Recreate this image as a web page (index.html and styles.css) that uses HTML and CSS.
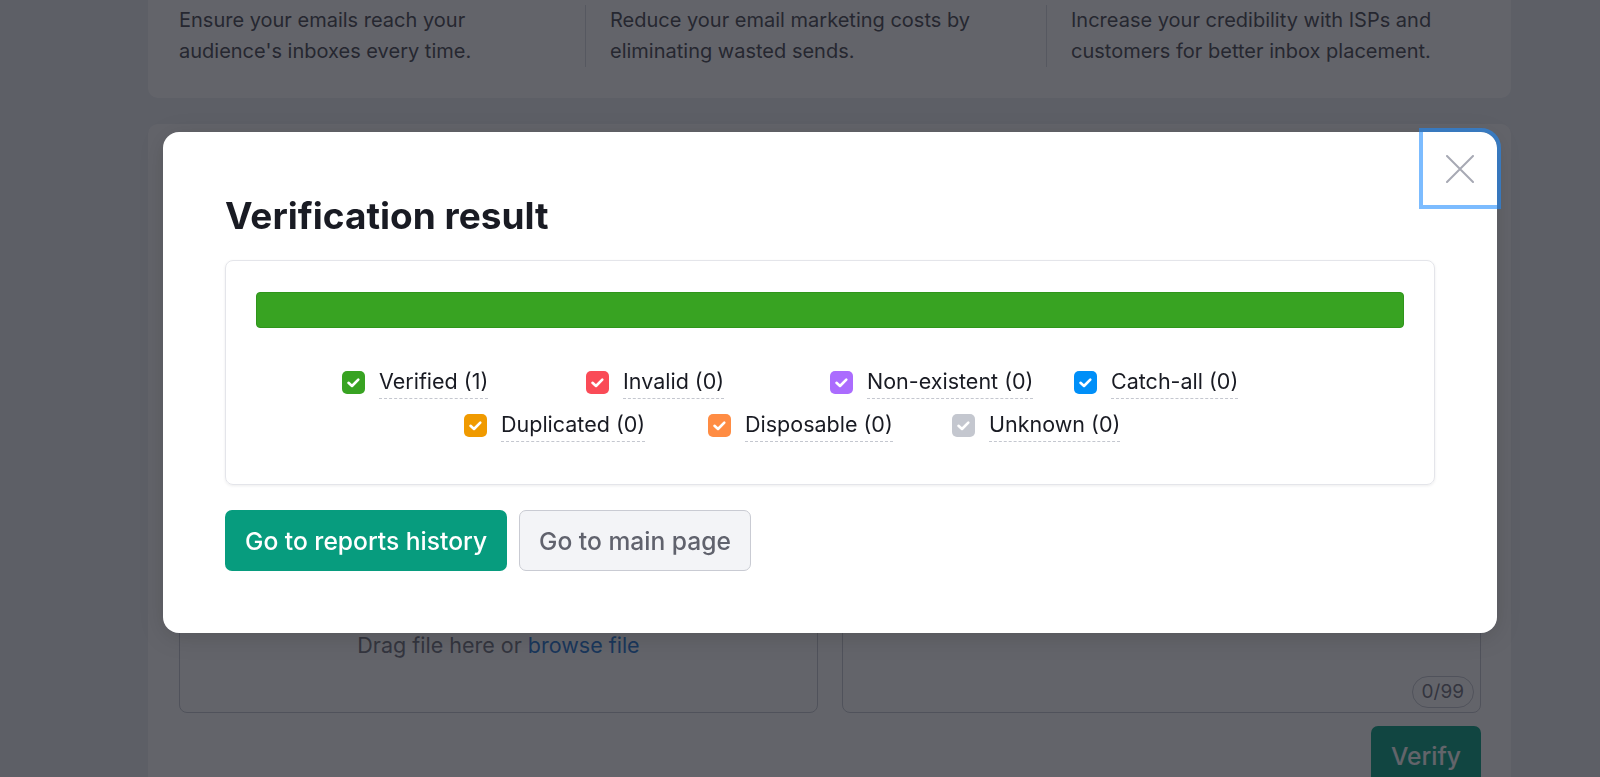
FILE: index.html
```html
<!DOCTYPE html>
<html lang="en">
<head>
<meta charset="utf-8">
<title>Email verification</title>
<link rel="stylesheet" href="styles.css">
</head>
<body>
<main class="content">
  <section class="card benefits">
    <p class="benefit">Ensure your emails reach your audience's inboxes every time.</p>
    <p class="benefit">Reduce your email marketing costs by eliminating wasted sends.</p>
    <p class="benefit">Increase your credibility with ISPs and customers for better inbox placement.</p>
  </section>

  <section class="card verifier">
    <div class="inputs">
      <div class="dropzone">
        <p class="drop-text">Drag file here or <a class="link" href="#">browse file</a></p>
      </div>
      <div class="paste">
        <span class="counter">0/99</span>
      </div>
    </div>
    <div class="verify-row">
      <button class="btn btn-verify" type="button">Verify</button>
    </div>
  </section>
</main>

<div class="overlay">
  <div class="modal" role="dialog" aria-labelledby="modal-title">
    <button class="close" type="button" aria-label="Close">
      <svg width="28" height="28" viewBox="0 0 28 28" aria-hidden="true">
        <path d="M1 1 L27 27 M27 1 L1 27" stroke="#a7a9b4" stroke-width="2" fill="none" stroke-linecap="round"/>
      </svg>
    </button>
    <h1 id="modal-title" class="modal-title">Verification result</h1>

    <div class="result-card">
      <div class="bar"></div>
      <ul class="legend">
        <li class="legend-item">
          <span class="check check-green"><svg viewBox="0 0 23 23"><polyline points="6.5,11.8 10,15 16.3,8.6"/></svg></span>
          <span class="legend-label">Verified (1)</span>
        </li>
        <li class="legend-item">
          <span class="check check-red"><svg viewBox="0 0 23 23"><polyline points="6.5,11.8 10,15 16.3,8.6"/></svg></span>
          <span class="legend-label">Invalid (0)</span>
        </li>
        <li class="legend-item">
          <span class="check check-violet"><svg viewBox="0 0 23 23"><polyline points="6.5,11.8 10,15 16.3,8.6"/></svg></span>
          <span class="legend-label">Non-existent (0)</span>
        </li>
        <li class="legend-item">
          <span class="check check-blue"><svg viewBox="0 0 23 23"><polyline points="6.5,11.8 10,15 16.3,8.6"/></svg></span>
          <span class="legend-label">Catch-all (0)</span>
        </li>
        <li class="legend-item">
          <span class="check check-yellow"><svg viewBox="0 0 23 23"><polyline points="6.5,11.8 10,15 16.3,8.6"/></svg></span>
          <span class="legend-label">Duplicated (0)</span>
        </li>
        <li class="legend-item">
          <span class="check check-orange"><svg viewBox="0 0 23 23"><polyline points="6.5,11.8 10,15 16.3,8.6"/></svg></span>
          <span class="legend-label">Disposable (0)</span>
        </li>
        <li class="legend-item">
          <span class="check check-gray"><svg viewBox="0 0 23 23"><polyline points="6.5,11.8 10,15 16.3,8.6"/></svg></span>
          <span class="legend-label">Unknown (0)</span>
        </li>
      </ul>
    </div>

    <div class="modal-actions">
      <button class="btn btn-primary" type="button">Go to reports history</button>
      <button class="btn btn-secondary" type="button">Go to main page</button>
    </div>
  </div>
</div>
</body>
</html>
```

FILE: styles.css
```css
* {
  box-sizing: border-box;
}

html, body {
  margin: 0;
  padding: 0;
}

body {
  width: 1600px;
  height: 777px;
  overflow: hidden;
  background: #eceef2;
  font-family: "Inter", "Noto Sans", "Liberation Sans", sans-serif;
  color: #191b23;
}

/* ---------- background page ---------- */
.content {
  width: 1363px;
  margin: -25px 0 0 148px;
  display: flex;
  flex-direction: column;
  gap: 26px;
}

.card {
  background: #ffffff;
  border-radius: 10px;
}

.benefits {
  display: grid;
  grid-template-columns: 406px 461px 1fr;
  padding: 30px 30px 31px 31px;
}

.benefit {
  margin: 0;
  padding-right: 25px;
  font-size: 20px;
  line-height: 30.8px;
  color: #41434c;
}

.benefit + .benefit {
  border-left: 1px solid #d6d8df;
  padding-left: 24px;
}

.verifier {
  padding: 30px 30px 40px 31px;
}

.inputs {
  display: grid;
  grid-template-columns: 1fr 1fr;
  gap: 24px;
  height: 559px;
}

.dropzone {
  border: 1px solid #c4c7cf;
  border-radius: 8px;
  display: flex;
  flex-direction: column;
  justify-content: flex-end;
  align-items: center;
  padding-bottom: 53px;
}

.drop-text {
  margin: 0;
  font-size: 21.5px;
  line-height: 28px;
  color: #6c6e79;
}

.link {
  color: #1b73d0;
  text-decoration: none;
}

.paste {
  border: 1px solid #c4c7cf;
  border-radius: 8px;
  display: flex;
  justify-content: flex-end;
  align-items: flex-end;
  padding: 0 6px 4px 0;
}

.counter {
  display: inline-flex;
  align-items: center;
  height: 32px;
  padding: 0 9px;
  border: 1px solid #c4c7cf;
  border-radius: 16px;
  font-size: 19px;
  color: #6c6e79;
}

.verify-row {
  display: flex;
  justify-content: flex-end;
  margin-top: 13px;
}

/* ---------- buttons ---------- */
.btn {
  font-family: inherit;
  font-size: 24.6px;
  font-weight: 500;
  height: 61px;
  border-radius: 7px;
  cursor: pointer;
  white-space: nowrap;
}

.btn-verify {
  width: 110px;
  border: none;
  background: #009f81;
  color: #ffffff;
}

.btn-primary {
  border: none;
  padding: 0 20px;
  background: #079c7e;
  color: #ffffff;
}

.btn-secondary {
  padding: 0 19px;
  border: 1px solid #c9cbd3;
  background: #f3f4f7;
  color: #60626d;
}

/* ---------- overlay & modal ---------- */
.overlay {
  position: fixed;
  inset: 0;
  background: rgba(25, 27, 35, 0.68);
  display: flex;
  justify-content: center;
  align-items: flex-start;
  padding: 132px 0 0 60px;
}

.modal {
  position: relative;
  width: 1334px;
  padding: 62px;
  background: #ffffff;
  border-radius: 16px;
  box-shadow: 0 4px 24px rgba(0, 0, 0, 0.15);
}

.close {
  position: absolute;
  top: 0;
  right: 0;
  width: 74px;
  height: 73px;
  padding: 0;
  border: none;
  background: transparent;
  border-radius: 0 16px 0 0;
  display: flex;
  align-items: center;
  justify-content: center;
  outline: 4px solid rgba(30, 140, 255, 0.58);
  outline-offset: 0;
}

.modal-title {
  margin: 0 0 22px;
  font-size: 37px;
  line-height: 44px;
  font-weight: 700;
  color: #191b23;
}

.result-card {
  border: 1px solid #e4e5ea;
  border-radius: 8px;
  padding: 31px 30px 43px;
  box-shadow: 0 1px 3px rgba(25, 27, 35, 0.08);
}

.bar {
  height: 36px;
  background: #38a322;
  border: 1px solid #2f951b;
  border-radius: 4px;
}

.legend {
  list-style: none;
  margin: 38px 0 0;
  padding: 0;
  display: flex;
  flex-wrap: wrap;
  justify-content: center;
  row-gap: 11px;
}

.legend-item {
  width: 244px;
  height: 32px;
  display: flex;
  align-items: center;
  gap: 14px;
}

.check {
  flex: none;
  width: 23px;
  height: 23px;
  border-radius: 5px;
  display: flex;
}

.check svg {
  width: 23px;
  height: 23px;
  fill: none;
  stroke: #ffffff;
  stroke-width: 2.6;
  stroke-linecap: round;
  stroke-linejoin: round;
}

.check-green { background: #38a322; }
.check-red { background: #fa4b57; }
.check-violet { background: #ab6cfe; }
.check-blue { background: #008ff8; }
.check-yellow { background: #f09a00; }
.check-orange { background: #ff8c43; }
.check-gray { background: #c4c7cf; }

.legend-label {
  font-size: 21.5px;
  line-height: 30px;
  padding-bottom: 2px;
  color: #191b23;
  border-bottom: 1px dashed #c4c7cf;
  white-space: nowrap;
}

.modal-actions {
  display: flex;
  gap: 12px;
  margin-top: 25px;
}
```
